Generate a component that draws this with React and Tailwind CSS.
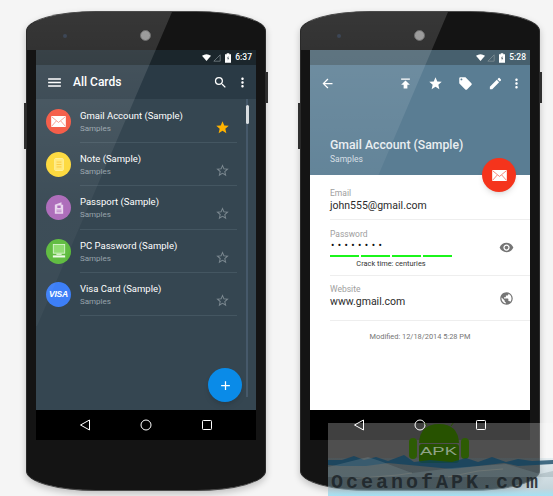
import React from "react";
import {
  MdMenu,
  MdSearch,
  MdMoreVert,
  MdArrowBack,
  MdStar,
  MdStarBorder,
  MdEdit,
  MdLocalOffer,
  MdPublish,
  MdVisibility,
  MdPublic,
  MdAdd,
} from "react-icons/md";

const items = [
  { name: "Gmail Account (Sample)", color: "bg-[#f4503a]", icon: "mail", starred: true },
  { name: "Note (Sample)", color: "bg-[#fdd835]", icon: "note" },
  { name: "Passport (Sample)", color: "bg-[#ab68b8]", icon: "passport" },
  { name: "PC Password (Sample)", color: "bg-[#5cba3c]", icon: "pc" },
  { name: "Visa Card (Sample)", color: "bg-[#3d7ff7]", icon: "visa" },
];

const MailGlyph = ({ className, line = "#f4503a" }) => (
  <svg viewBox="0 0 16 12" className={className}>
    <rect x="0" y="0" width="16" height="12" fill="#fff" />
    <path d="M0.5 0.8 L8 7 L15.5 0.8 M0.5 11.2 L5.5 5.5 M15.5 11.2 L10.5 5.5" fill="none" stroke={line} strokeOpacity="0.8" strokeWidth="0.8" />
  </svg>
);

const ItemIcon = ({ type }) => {
  if (type === "mail") return <MailGlyph className="w-[15px] h-[11px]" />;
  if (type === "note")
    return (
      <svg viewBox="0 0 12 16" className="w-[10px] h-[13px]">
        <rect x="0.7" y="0.7" width="10.6" height="14.6" rx="1" fill="#ffe873" stroke="#fff3a8" strokeWidth="1" />
        <path d="M3 5h6M3 8h6M3 11h6" stroke="#fbc02d" strokeWidth="1" />
      </svg>
    );
  if (type === "passport")
    return (
      <svg viewBox="0 0 12 16" className="w-[10px] h-[14px]">
        <path d="M1 4 L9 1 L9 4 L11 4 L11 15 L1 15 Z" fill="#e9d5ee" />
        <rect x="4" y="5" width="4" height="3" fill="#ab68b8" />
        <path d="M3 10.5h6M3 12.5h6" stroke="#ab68b8" strokeWidth="0.9" />
      </svg>
    );
  if (type === "pc")
    return (
      <svg viewBox="0 0 16 16" className="w-[14px] h-[14px]">
        <rect x="1.5" y="0.5" width="13" height="10" fill="#8ddc6e" stroke="#d9f5cd" strokeWidth="1" />
        <rect x="5" y="11" width="6" height="1.5" fill="#d9f5cd" />
        <rect x="1" y="13" width="14" height="2.4" fill="#eefae8" />
      </svg>
    );
  return <span className="text-white text-[8.5px] font-bold italic font-['Liberation_Sans',sans-serif] tracking-tight">VISA</span>;
};

const StatusBar = ({ time, bg }) => (
  <div className={`h-[15px] shrink-0 flex items-center justify-end pr-[4px] gap-[4px] ${bg}`}>
    <svg viewBox="0 0 12 9" className="w-[9px] h-[7px]">
      <path d="M0 2 Q6 -2 12 2 L6 9 Z" fill="#fff" />
    </svg>
    <svg viewBox="0 0 10 10" className="w-[8px] h-[8px] -ml-[2px]">
      <path d="M9 1 L9 9 L1 9 Z" fill="none" stroke="#8d999f" strokeWidth="0.8" />
    </svg>
    <svg viewBox="0 0 7 11" className="w-[6px] h-[10px]">
      <path d="M2 0h3v1h2v10H0V1h2z" fill="#fff" />
      <path d="M4 3 L2.4 6 H3.6 L3 8.6 L4.8 5.2 H3.6 Z" fill="#33434d" />
    </svg>
    <span className="text-[8.5px] leading-none text-white font-medium">{time}</span>
  </div>
);

const NavBar = () => (
  <div className="h-[30px] shrink-0 bg-black flex items-center justify-center gap-[49px]">
    <svg viewBox="0 0 12 12" className="w-[12px] h-[12px]">
      <path d="M10.5 1 L10.5 11 L1.5 6 Z" fill="none" stroke="#fff" strokeWidth="1" strokeLinejoin="round" />
    </svg>
    <svg viewBox="0 0 12 12" className="w-[12px] h-[12px]">
      <circle cx="6" cy="6" r="5" fill="none" stroke="#fff" strokeWidth="1" />
    </svg>
    <svg viewBox="0 0 12 12" className="w-[12px] h-[12px]">
      <rect x="1.5" y="1.5" width="9" height="9" rx="0.8" fill="none" stroke="#fff" strokeWidth="1" />
    </svg>
  </div>
);

const Phone = ({ children, glare }) => (
  <div className="relative w-[240px] h-[480px] shrink-0">
    {/* side buttons */}
    <div className="absolute -right-[2px] top-[61px] w-[3px] h-[31px] bg-[#333]" />
    <div className="absolute -left-[2px] top-[92px] w-[3px] h-[46px] bg-[#333]" />
    <div className="relative w-full h-full overflow-hidden rounded-[70px/20px] bg-[#141414] border border-[#4a4a4a] border-x-[#2a2a2a] pt-[38px] px-[9px] shadow-[0_3px_7px_rgba(0,0,0,0.22)]">
      <div className="absolute top-[22px] left-[36px] w-[4px] h-[4px] rounded-full bg-[#1e2a3c]" />
      <div className="absolute top-[18px] left-[113px] w-[11px] h-[11px] rounded-full bg-[#8c8c8c] border border-[#555]" />
      <div className="relative flex flex-col h-[390px]">{children}</div>
      <div className={`absolute inset-0 pointer-events-none bg-gradient-to-b from-white/15 via-white/4 via-[40%] to-white/2 ${glare}`} />
    </div>
  </div>
);

const Field = ({ label, value, icon, top }) => (
  <div className={`ml-[20px] flex items-center border-b border-[#eeeeee] h-[45px] pr-[16px]`}>
    <div className={`flex-1 self-start ${top}`}>
      <div className="text-[8.5px] leading-[12px] text-[#9e9e9e]">{label}</div>
      <div className="text-[10.5px] leading-[14px] text-[#2b2b2b]">{value}</div>
    </div>
    {icon}
  </div>
);

const AllCards = () => (
  <Phone glare="[clip-path:polygon(0_0,145px_0,10px_314px,9px_314px,9px_38px,0_38px)]">
    <StatusBar time="6:37" bg="bg-[#1b262c]" />
    <div className="h-[34px] shrink-0 bg-[#2a3a45] flex items-center text-white pl-[10px] pr-[6px]">
      <MdMenu className="w-[17px] h-[17px]" />
      <span className="ml-[10px] text-[12px] font-medium flex-1">All Cards</span>
      <MdSearch className="w-[15px] h-[15px] mr-[7px]" />
      <MdMoreVert className="w-[15px] h-[15px]" />
    </div>
    <div className="relative flex-1 bg-[#354651]">
      <div className="pt-[1px]">
        {items.map((item) => (
          <div key={item.name} className="flex items-center h-[43.2px]">
            <div className={`ml-[10px] w-[25px] h-[25px] rounded-full flex items-center justify-center shrink-0 ${item.color}`}>
              <ItemIcon type={item.icon} />
            </div>
            <div className="ml-[9px] w-[157px] h-full flex border-b border-[#445661]">
              <div className="flex-1 pt-[9px]">
                <div className="text-[9.5px] leading-[13px] text-white">{item.name}</div>
                <div className="text-[8px] leading-[13px] text-[#97a3ab]">Samples</div>
              </div>
              <div className="pt-[20px] pr-[7px]">
                {item.starred ? (
                  <MdStar className="w-[15px] h-[15px] text-[#ffb300]" />
                ) : (
                  <MdStarBorder className="w-[15px] h-[15px] text-[#7b8890]" />
                )}
              </div>
            </div>
          </div>
        ))}
      </div>
      {/* scrollbar */}
      <div className="absolute top-0 right-[8px] w-[2px] h-[298px] bg-[#46596a]" />
      <div className="absolute top-[6px] right-[7.5px] w-[3px] h-[19px] rounded-sm bg-[#d8dde0]" />
      <div className="absolute top-[269px] right-[14px] w-[34px] h-[34px] rounded-full bg-[#0a8be8] shadow-md flex items-center justify-center">
        <MdAdd className="w-[15px] h-[15px] text-white" />
      </div>
    </div>
    <NavBar />
  </Phone>
);

const Detail = () => (
  <Phone glare="[clip-path:polygon(0_0,147px_0,77px_164px,9px_164px,9px_38px,0_38px)]">
    <StatusBar time="5:28" bg="bg-[#47606e]" />
    <div className="h-[110px] shrink-0 bg-[#5a7d93] text-white flex flex-col">
      <div className="h-[36px] flex items-center pl-[10px] pr-[6px]">
        <MdArrowBack className="w-[15px] h-[15px]" />
        <div className="flex-1" />
        <div className="flex items-center gap-[15px]">
          <MdPublish className="w-[15px] h-[15px]" />
          <MdStar className="w-[15px] h-[15px]" />
          <MdLocalOffer className="w-[15px] h-[15px]" />
          <MdEdit className="w-[15px] h-[15px]" />
          <MdMoreVert className="w-[15px] h-[15px] -ml-[9px]" />
        </div>
      </div>
      <div className="pl-[20px] pt-[36px]">
        <div className="text-[12.25px] leading-[16px] font-medium text-[#e9eef1]">Gmail Account (Sample)</div>
        <div className="text-[8.5px] leading-[12px] text-[#d5dee3]">Samples</div>
      </div>
    </div>
    <div className="relative flex-1 bg-white">
      <div className="absolute -top-[17px] right-[14px] w-[34px] h-[34px] rounded-full bg-[#f5341c] shadow-md flex items-center justify-center">
        <MailGlyph className="w-[15px] h-[11px]" line="#f5341c" />
      </div>
      <Field label="Email" value="john555@gmail.com" top="pt-[12px]" />
      <div className="ml-[20px] flex items-center border-b border-[#eeeeee] h-[56px] pr-[16px]">
        <div className="flex-1 self-start pt-[8px]">
          <div className="text-[8.5px] leading-[12px] text-[#9e9e9e]">Password</div>
          <div className="text-[10px] leading-[12px] text-[#111] tracking-[3.4px] pl-[1px]">••••••••</div>
          <div className="flex gap-[2px] mt-[3px]">
            <div className="w-[29px] h-[2px] bg-[#1bf51b]" />
            <div className="w-[29px] h-[2px] bg-[#1bf51b]" />
            <div className="w-[29px] h-[2px] bg-[#1bf51b]" />
            <div className="w-[29px] h-[2px] bg-[#1bf51b]" />
          </div>
          <div className="w-[122px] mt-[1px] text-center text-[7.4px] leading-[12px] text-[#333]">Crack time: centuries</div>
        </div>
        <MdVisibility className="w-[15px] h-[15px] text-[#757575]" />
      </div>
      <Field
        label="Website"
        value="www.gmail.com"
        top="pt-[7px]"
        icon={<MdPublic className="w-[15px] h-[15px] text-[#757575]" />}
      />
      <div className="text-center text-[7.4px] leading-[12px] text-[#757575] pt-[10px]">Modified: 12/18/2014 5:28 PM</div>
    </div>
    <NavBar />
  </Phone>
);

// site watermark laid over the lower right corner
const Watermark = () => (
  <div className="absolute left-[328px] top-[423px] w-[225px] h-[73px] overflow-hidden bg-white/25">
    <div className="absolute inset-x-0 bottom-0 h-[38px] bg-gradient-to-b from-[#3f8fb0]/10 via-[#2f6f88]/25 via-[80%] to-[#9be0f5]/90" />
    <svg viewBox="0 0 225 73" className="absolute inset-0 w-full h-full">
      <path d="M91 20 Q92 1 111 1 Q130 1 131 20 Z" fill="#275200" />
      <path d="M99 3 L96 -1 M123 3 L126 -1" stroke="#275200" strokeWidth="1" />
      <rect x="91" y="21" width="40" height="19" rx="3" fill="#275200" />
      <rect x="81" y="15" width="8" height="21" rx="4" fill="#2d5c04" />
      <rect x="133" y="15" width="8" height="21" rx="4" fill="#2d5c04" />
      <text x="92" y="32" fontSize="10" textLength="37" lengthAdjust="spacingAndGlyphs" fill="#8fa387" fontFamily="Liberation Sans, sans-serif">APK</text>
      <path d="M0 37 L14 37 L26 33 L36 37 L48 34 L60 38 L76 32 L86 39 L102 37 L112 38 L124 39 L138 35 L150 39 L164 34 L178 39 L190 36 L204 38 L225 37 L225 41 L190 43 L176 40 L150 43 L124 46 L60 40 L38 43 L12 43 L0 42 Z" fill="#0d4260" fillOpacity="0.75" />
      <path d="M0 44 L40 34 L52 38 L84 50 L124 45 L178 41 L212 51 L225 48 L225 54 L0 54 Z" fill="#7c8d95" fillOpacity="0.3" />
      <path d="M20 56 L70 52 L84 50 M120 54 L150 48 L175 46" fill="none" stroke="#8a8a80" strokeOpacity="0.5" strokeWidth="0.8" />
    </svg>
    <div className="absolute left-[3px] bottom-[3px] font-['Liberation_Mono',monospace] font-bold text-[20px] leading-[20px] tracking-[3px] text-[#1c2327]/85 whitespace-nowrap">
      OceanofAPK.com
    </div>
  </div>
);

export default function App() {
  return (
    <div className="relative w-[553px] h-[496px] overflow-hidden bg-[#f5f5f5] font-['Roboto',sans-serif]">
      <div className="flex gap-[34px] pl-[26px] pt-[11px]">
        <AllCards />
        <Detail />
      </div>
      <Watermark />
    </div>
  );
}
